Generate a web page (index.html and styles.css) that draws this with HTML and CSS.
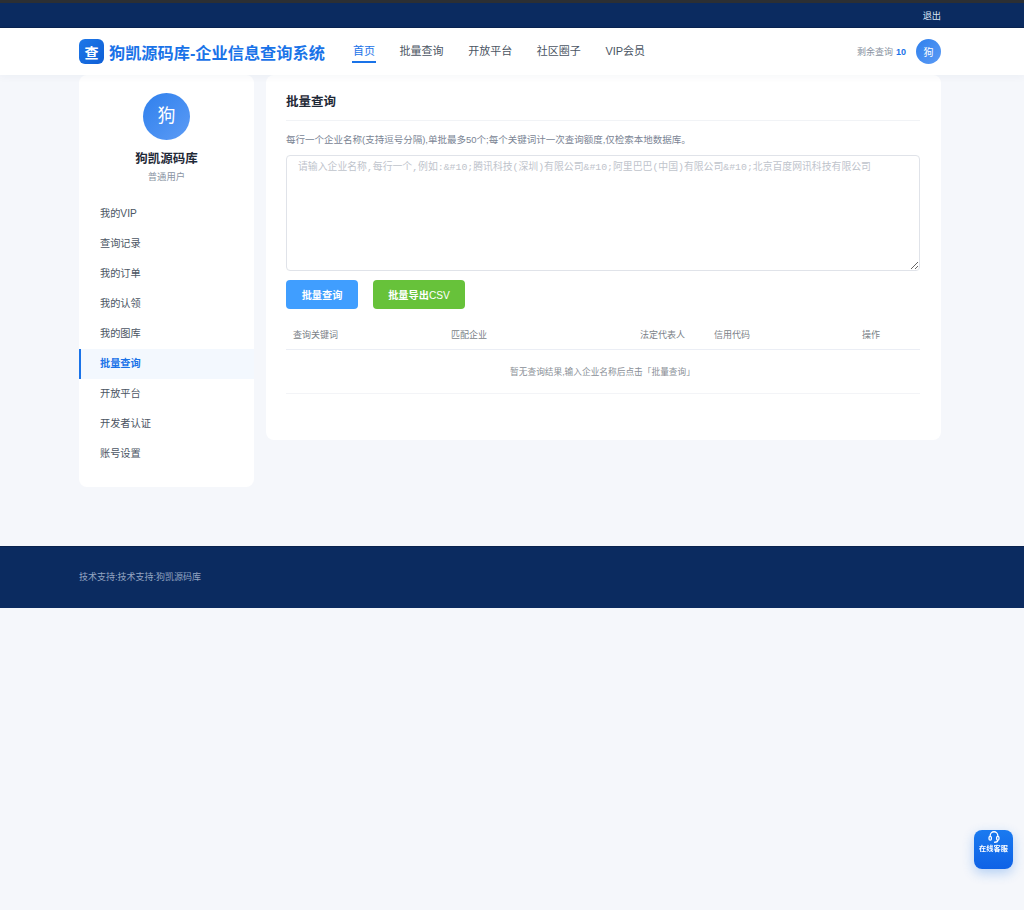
FILE: index.html
```html
<!DOCTYPE html>
<html lang="zh-CN">
<head>
    <meta charset="UTF-8">
    <meta name="viewport" content="width=device-width, initial-scale=1.0">
    <title>批量查询 - 狗凯源码库</title>
    <link rel="stylesheet" href="styles.css">
</head>
<body>
    <div class="topbar">
        <div class="wrap topbar-inner"><a class="logout">退出</a></div>
    </div>

    <header class="header">
        <div class="wrap header-inner">
            <div class="brand">
                <span class="brand-icon">查</span>
                <span class="brand-name">狗凯源码库-企业信息查询系统</span>
            </div>
            <nav class="nav">
                <a class="nav-item active">首页</a>
                <a class="nav-item">批量查询</a>
                <a class="nav-item">开放平台</a>
                <a class="nav-item">社区圈子</a>
                <a class="nav-item">VIP会员</a>
            </nav>
            <div class="quota">
                <span class="quota-label">剩余查询</span>
                <b class="quota-num">10</b>
                <span class="avatar-small">狗</span>
            </div>
        </div>
    </header>

    <div class="wrap content">
        <aside class="sidebar">
            <div class="profile">
                <div class="avatar">狗</div>
                <div class="profile-name">狗凯源码库</div>
                <div class="profile-role">普通用户</div>
            </div>
            <ul class="side-menu">
                <li>我的VIP</li>
                <li>查询记录</li>
                <li>我的订单</li>
                <li>我的认领</li>
                <li>我的图库</li>
                <li class="active">批量查询</li>
                <li>开放平台</li>
                <li>开发者认证</li>
                <li>账号设置</li>
            </ul>
        </aside>

        <main class="panel">
            <h2 class="panel-title">批量查询</h2>
            <p class="hint">每行一个企业名称(支持逗号分隔),单批最多50个;每个关键词计一次查询额度,仅检索本地数据库。</p>
            <textarea class="batch-input" placeholder="请输入企业名称,每行一个,例如:&amp;#10;腾讯科技(深圳)有限公司&amp;#10;阿里巴巴(中国)有限公司&amp;#10;北京百度网讯科技有限公司"></textarea>
            <div class="actions">
                <button class="btn btn-blue">批量查询</button>
                <button class="btn btn-green">批量导出<span class="btn-latin">CSV</span></button>
            </div>
            <table class="result-table">
                <thead>
                    <tr>
                        <th class="col-key">查询关键词</th>
                        <th class="col-company">匹配企业</th>
                        <th class="col-legal">法定代表人</th>
                        <th class="col-code">信用代码</th>
                        <th class="col-op">操作</th>
                    </tr>
                </thead>
                <tbody>
                    <tr>
                        <td colspan="5" class="empty">暂无查询结果,输入企业名称后点击「批量查询」</td>
                    </tr>
                </tbody>
            </table>
        </main>
    </div>

    <footer class="footer">
        <div class="wrap">技术支持:技术支持:狗凯源码库</div>
    </footer>

    <a class="service">
        <svg class="service-icon" viewBox="0 0 24 24" fill="none" stroke="#fff" stroke-width="2.2" stroke-linecap="round">
            <path d="M5.500 11V9.500a6.500 6.500 0 0 1 13 0V11"/>
            <rect x="3.500" y="11" width="4" height="6.500" rx="2"/>
            <rect x="16.500" y="11" width="4" height="6.500" rx="2"/>
            <path d="M18.500 18c-.5 2-2.500 3-5.500 3"/>
        </svg>
        <span class="service-text">在线客服</span>
    </a>
</body>
</html>
```

FILE: styles.css
```css
* {
    box-sizing: border-box;
}
body {
    margin: 0;
    min-height: 910px;
    background: #f5f7fb;
    color: #1f2937;
    font-family: "Liberation Sans", "Noto Sans CJK SC", sans-serif;
    font-size: 12px;
}
.wrap {
    width: 862px;
    margin-left: 79px;
}
.topbar {
    height: 28px;
    background: #0b2b60;
    border-top: 3px solid #2c2f33;
    border-bottom: 1px solid #0a2450;
}
.topbar-inner {
    display: flex;
    justify-content: flex-end;
    align-items: center;
    height: 24px;
}
.logout {
    color: #dbe6f5;
    font-size: 9.2px;
}
.header {
    height: 47px;
    background: #fff;
    box-shadow: 0 2px 8px rgba(15, 40, 90, 0.04);
    position: relative;
}
.header-inner {
    display: flex;
    align-items: center;
    height: 47px;
}
.brand {
    display: flex;
    align-items: center;
    gap: 5px;
    width: 274px;
}
.brand-icon {
    display: flex;
    align-items: center;
    justify-content: center;
    width: 25px;
    height: 25px;
    border-radius: 6px;
    background: linear-gradient(135deg, #1e78e8, #0f5fd6);
    color: #fff;
    font-size: 14px;
    font-weight: 700;
}
.brand-name {
    color: #1a73e8;
    font-size: 16.2px;
    font-weight: 700;
    white-space: nowrap;
}
.nav {
    display: flex;
    gap: 24.6px;
    flex: 1;
}
.nav-item {
    height: 23px;
    line-height: 22px;
    color: #4b5563;
    font-size: 11px;
    border-bottom: 2px solid transparent;
}
.nav-item.active {
    margin: 0 -1px;
    padding: 0 1px;
    color: #1a73e8;
    border-bottom-color: #1a73e8;
}
.quota {
    display: flex;
    align-items: center;
}
.quota-label {
    color: #8a94a3;
    font-size: 9px;
}
.quota-num {
    color: #1a73e8;
    font-size: 9px;
    margin: 0 10px 0 3px;
}
.avatar-small {
    display: flex;
    align-items: center;
    justify-content: center;
    width: 25px;
    height: 25px;
    border-radius: 50%;
    background: linear-gradient(135deg, #2f80ed, #5c9bf5);
    color: #fff;
    font-size: 10px;
}
.content {
    display: flex;
    align-items: flex-start;
    gap: 12px;
    height: 471px;
}
.sidebar {
    width: 175px;
    height: 412px;
    background: #fff;
    border-radius: 8px;
}
.profile {
    padding-top: 18px;
    text-align: center;
}
.avatar {
    width: 47px;
    height: 47px;
    margin: 0 auto;
    border-radius: 50%;
    background: linear-gradient(135deg, #2f80ed, #5c9bf5);
    color: #fff;
    font-size: 18px;
    line-height: 47px;
}
.profile-name {
    margin-top: 10px;
    color: #1f2937;
    font-size: 12.5px;
    font-weight: 700;
    line-height: 18px;
}
.profile-role {
    margin-top: 2px;
    color: #8a94a3;
    font-size: 9.4px;
    line-height: 14px;
}
.side-menu {
    list-style: none;
    margin: 15px 0 0;
    padding: 0;
}
.side-menu li {
    height: 30px;
    padding-left: 21px;
    color: #4b5563;
    font-size: 10.2px;
    line-height: 30px;
}
.side-menu li.active {
    padding-left: 19px;
    background: #f3f8fe;
    border-left: 2px solid #1a73e8;
    color: #1a73e8;
    font-weight: 700;
}
.panel {
    flex: 1;
    height: 365px;
    padding: 0 21px 0 20px;
    background: #fff;
    border-radius: 8px;
}
.panel-title {
    margin: 0;
    height: 46px;
    color: #1f2937;
    font-size: 12.5px;
    font-weight: 700;
    line-height: 54px;
    border-bottom: 1px solid #f1f3f6;
}
.hint {
    margin: 12px 0 0;
    color: #7a8494;
    font-size: 9.5px;
    line-height: 14px;
}
.batch-input {
    display: block;
    width: 634px;
    height: 116px;
    margin-top: 8px;
    padding: 5px 11px;
    border: 1px solid #e0e3e9;
    border-radius: 4px;
    font-family: "Liberation Mono", "Noto Sans CJK SC", monospace;
    font-size: 9.85px;
    line-height: 14px;
}
.batch-input::placeholder {
    color: #c0c4cc;
}
.actions {
    display: flex;
    gap: 15px;
    margin-top: 9px;
}
.btn {
    height: 29px;
    border: none;
    border-radius: 4px;
    color: #fff;
    font-family: inherit;
    font-size: 10.2px;
    font-weight: 700;
}
.btn-latin {
    font-weight: 400;
}
.btn-blue {
    width: 72px;
    background: #409eff;
}
.btn-green {
    width: 92px;
    background: #67c23a;
}
.result-table {
    width: 634px;
    margin-top: 11px;
    border-collapse: collapse;
    table-layout: fixed;
    font-size: 9px;
}
.result-table th {
    height: 29px;
    padding: 0 7px;
    color: #7a7f87;
    font-weight: 400;
    text-align: left;
    border-bottom: 1px solid #ebeef5;
}
.col-key {
    width: 158px;
}
.col-company {
    width: 170px;
}
.col-legal {
    width: 78px;
}
.col-code {
    width: 163px;
}
.result-table th.col-legal {
    text-align: right;
}
.result-table th.col-code {
    padding-left: 22px;
}
.empty {
    height: 44px;
    padding-right: 2px;
    color: #8a8f97;
    font-size: 8.7px;
    text-align: center;
    border-bottom: 1px solid #f3f4f7;
}
.footer {
    height: 62px;
    background: #0b2b60;
    border-top: 1px solid #09224e;
    color: #94a5c2;
    font-size: 9px;
    line-height: 61px;
}
.service {
    position: fixed;
    right: 11px;
    bottom: 41px;
    display: flex;
    flex-direction: column;
    align-items: center;
    width: 39px;
    height: 39px;
    border-radius: 8px;
    background: linear-gradient(180deg, #1a7af0, #0f62e6);
    box-shadow: 0 4px 12px rgba(26, 115, 232, 0.3);
    color: #fff;
}
.service-icon {
    width: 14px;
    height: 14px;
}
.service-text {
    font-size: 7.2px;
    font-weight: 700;
    line-height: 10px;
}
```
